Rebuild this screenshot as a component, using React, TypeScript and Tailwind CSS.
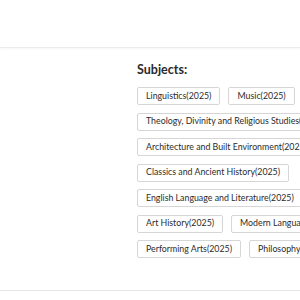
import React from "react";

const subjects = [
  "Linguistics(2025)",
  "Music(2025)",
  "Theology, Divinity and Religious Studies(2025)",
  "Architecture and Built Environment(2025)",
  "Classics and Ancient History(2025)",
  "English Language and Literature(2025)",
  "Art History(2025)",
  "Modern Languages(2025)",
  "Performing Arts(2025)",
  "Philosophy(2025)",
];

const SubjectTag = ({ label }: { label: string }) => {
  return (
    <span className="inline-flex items-center h-[18px] px-2 whitespace-nowrap rounded-[2px] border border-[#d6d6d6] bg-white text-[8.8px] leading-none text-[#2b2b2b]">
      {label}
    </span>
  );
};

export default function App() {
  return (
    <div
      className="w-[300px] h-[300px] overflow-hidden bg-white"
      style={{ fontFamily: "Lato, 'Open Sans', sans-serif" }}
    >
      {/* Header strip */}
      <div className="h-[48px] border-b border-[#ececec] shadow-[0_1px_2px_rgba(0,0,0,0.04)]" />

      {/* Body */}
      <div className="flex h-[243px] border-b border-[#e6e6e6]">
        <div className="w-[137px] shrink-0" />
        <div className="pt-[14px]">
          <h3 className="text-[12.5px] leading-[15px] font-bold text-[#2b2b2b]">Subjects:</h3>
          <div className="mt-[10px] w-[240px] flex flex-wrap gap-x-2 gap-y-[7.5px]">
            {subjects.map((s) => (
              <SubjectTag key={s} label={s} />
            ))}
          </div>
        </div>
      </div>
    </div>
  );
}
